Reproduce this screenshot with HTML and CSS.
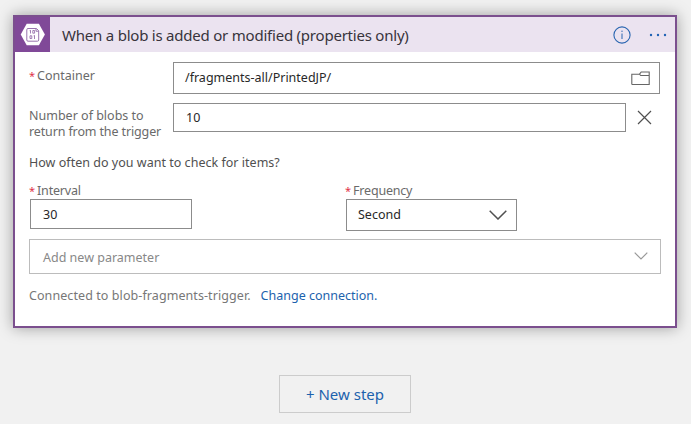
FILE: index.html
```html
<!DOCTYPE html>
<html lang="en">
<head>
<meta charset="utf-8">
<title>Logic app designer</title>
<link rel="stylesheet" href="styles.css">
</head>
<body>
<main class="designer">
  <section class="card">
    <header class="card-header">
      <div class="brand">
        <svg width="35" height="35" viewBox="0 0 35 35">
          <path d="M11.700 6.800h12.200l6 10.700-6 10.700H11.700l-6-10.700z" fill="#fff"/>
          <path d="M13 11.500h8.500l2.200 2.200v9.300q0 1.200-1.200 1.200H13q-1.200 0-1.200-1.200V12.700q0-1.200 1.200-1.200zM21 11.500v2.700h2.700" fill="none" stroke="#9873ad" stroke-width="1"/>
          <path d="M15.500 13.200v3.300M14.700 13.700h.8M17.800 13.500h1.800v2.700h-1.800zM15 18.800h1.800v2.700H15zM19.500 18.300v3.700M18.700 18.800h.8" fill="none" stroke="#9873ad" stroke-width=".9"/>
        </svg>
      </div>
      <h1 class="title">When a blob is added or modified (properties only)</h1>
      <svg class="info" width="18" height="18" viewBox="0 0 18 18" fill="none" stroke="#2965b0"><circle cx="9" cy="9" r="8.100" stroke-width="1.100"/><path d="M9 7.500v5.500M9 4.600v1.400"/></svg>
      <svg class="more" width="18" height="4" viewBox="0 0 18 4" fill="#1f62b5"><circle cx="2" cy="2" r="1.200"/><circle cx="9" cy="2" r="1.200"/><circle cx="16" cy="2" r="1.200"/></svg>
    </header>
    <div class="card-body">
      <div class="row row-container">
        <label class="label"><span class="req">*</span><span>Container</span></label>
        <div class="field field-path"><span>/fragments-all/PrintedJP/</span>
          <svg width="19" height="15" viewBox="0 0 19 15" fill="none" stroke="#666" stroke-width="1.100"><path d="M.8 13.500V3.200h7.700L10.200 1h8v12.500H.8M8.500 3.200l1.200 1.300h8.500"/></svg>
        </div>
      </div>
      <div class="row row-count">
        <label class="label label-count"><span>Number of blobs to</span><br><span class="second-line">return from the trigger</span></label>
        <div class="field field-count">10</div>
        <svg class="clear" width="15" height="15" viewBox="0 0 15 15" fill="none" stroke="#505050" stroke-width="1.200"><path d="M1 1l13 13M14 1L1 14"/></svg>
      </div>
      <p class="question">How often do you want to check for items?</p>
      <div class="schedule">
        <div class="interval">
          <label class="label"><span class="req">*</span><span class="tight">Interval</span></label>
          <div class="field field-interval">30</div>
        </div>
        <div class="frequency">
          <label class="label"><span class="req">*</span><span class="tight">Frequency</span></label>
          <div class="field field-frequency"><span>Second</span>
            <svg width="18" height="10" viewBox="0 0 18 10" fill="none" stroke="#505050" stroke-width="1.500"><path d="M.7.700L9 9 17.300.700"/></svg>
          </div>
        </div>
      </div>
      <div class="field parameter"><span>Add new parameter</span>
        <svg width="14" height="8" viewBox="0 0 14 8" fill="none" stroke="#999" stroke-width="1.200"><path d="M.7.700L7 7 13.300.700"/></svg>
      </div>
      <p class="connection"><span class="connected">Connected to blob-fragments-trigger.</span><a>Change connection.</a></p>
    </div>
  </section>
  <button class="new-step">+ New step</button>
</main>
</body>
</html>
```
FILE: styles.css
```css
* { box-sizing: border-box; }
body {
  margin: 0;
  background: #f1f1f1;
  font-family: "Noto Sans", "Open Sans", sans-serif;
  font-size: 12.5px;
  line-height: 16px;
  color: #6a6a6a;
}
span, a, h1 { white-space: nowrap; }
svg { display: block; flex: none; }
.designer {
  height: 424px;
  padding: 15px 14px 0 13px;
  display: flex;
  flex-direction: column;
  align-items: center;
  overflow: hidden;
}
.card {
  width: 664px;
  height: 313px;
  flex: none;
  border: 2px solid #7b4f8e;
  background: #fff;
  box-shadow: 0 0 14px rgba(0, 0, 0, .35);
}
.card-header {
  height: 35px;
  display: flex;
  align-items: center;
  background: #ebe3f0;
}
.brand { width: 35px; height: 35px; background: #804998; }
.title {
  margin: 1px 0 0 12px;
  flex: 1;
  font-size: 15px;
  font-weight: 400;
  letter-spacing: -.22px;
  line-height: 22px;
  color: #38343c;
}
.info { margin-right: 18px; }
.more { margin-right: 8px; }
.card-body { padding: 10px 14px 0; }
.row { display: flex; }
.label { flex: none; width: 144px; }
.req { color: #df3348; margin-right: 2px; font-size: 11px; }
.row-container { height: 32px; }
.row-container .label { padding-top: 6px; }
.second-line { letter-spacing: -.13px; }
.tight { letter-spacing: -.2px; }
.field {
  border: 1px solid #8c8c8c;
  background: #fff;
  display: flex;
  align-items: center;
  padding-left: 12px;
  color: #282828;
}
.field-path { width: 487px; padding: 0 9px 0 11px; justify-content: space-between; }
.row-count { margin-top: 9px; height: 29px; }
.label-count { padding-top: 5px; }
.field-count { width: 453px; padding-top: 1px; }
.clear { margin: 7px 0 0 11px; }
.question { margin: 23px 0 0; color: #505050; letter-spacing: .02px; }
.schedule { display: flex; margin-top: 12px; height: 48px; }
.schedule .label { display: block; height: 15px; line-height: 16px; }
.interval { width: 316px; }
.field-interval { width: 162px; height: 30px; margin: 1px 0 0 1px; padding-top: 1px; }
.field-frequency {
  width: 171px;
  height: 32px;
  margin: 1px 0 0 1px;
  padding: 0 9px 0 11px;
  justify-content: space-between;
}
.parameter {
  width: 632px;
  height: 35px;
  margin-top: 8px;
  padding: 3px 12px 0 13px;
  justify-content: space-between;
  border-color: #bcbcbc;
  color: #888;
}
.parameter svg { margin-top: -4px; }
.connection { margin: 14px 0 0; display: flex; gap: 10px; color: #777; }
.connected { letter-spacing: .08px; }
.connection a { color: #1c62ad; }
.new-step {
  width: 132px;
  height: 38px;
  margin-top: 47px;
  flex: none;
  padding: 0;
  border: 1px solid #ccc;
  background: #f1f1f1;
  font: 15px/20px "Noto Sans", "Open Sans", sans-serif;
  color: #1c62ad;
}
```
